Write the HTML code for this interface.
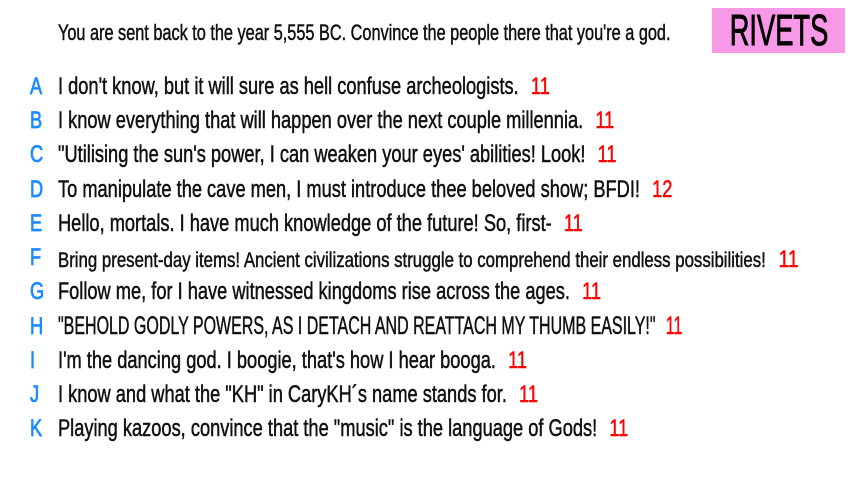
<!DOCTYPE html>
<html><head><meta charset="utf-8"><style>
body{margin:0;width:853px;height:480px;background:#fff;position:relative;overflow:hidden;font-family:"Liberation Sans Narrow","Liberation Sans",sans-serif;color:#111}
.t{position:absolute;white-space:nowrap;transform-origin:left center;transform:scaleX(.76);-webkit-text-stroke:0.5px currentColor}
.title{left:58px;top:20px;font-size:22px;transform:scaleX(.74)}
.box{position:absolute;left:712px;top:8px;width:133px;height:45px;background:#f899e8;font-size:44px;line-height:45px;color:#000}
.box span{position:absolute;left:50%;top:0;white-space:nowrap;transform:translateX(-50%) scaleX(.62);-webkit-text-stroke:1px #000}
.l{position:absolute;left:30px;color:#1a8cff;font-size:24px;-webkit-text-stroke:0.8px #1a8cff}
.r{left:58px;font-size:24px}
.n{color:#f00;margin-left:16px}
</style></head><body>
<div class="t title">You are sent back to the year 5,555 BC. Convince the people there that you're a god.</div>
<div class="box"><span>RIVETS</span></div>

<div class="l t" style="top:73px">A</div><div class="t r" style="top:73px">I don't know, but it will sure as hell confuse archeologists.<span class="n">11</span></div>
<div class="l t" style="top:107px">B</div><div class="t r" style="top:107px">I know everything that will happen over the next couple millennia.<span class="n">11</span></div>
<div class="l t" style="top:141px">C</div><div class="t r" style="top:141px">"Utilising the sun's power, I can weaken your eyes' abilities! Look!<span class="n">11</span></div>
<div class="l t" style="top:176px">D</div><div class="t r" style="top:176px">To manipulate the cave men, I must introduce thee beloved show; BFDI!<span class="n">12</span></div>
<div class="l t" style="top:210px">E</div><div class="t r" style="top:210px">Hello, mortals. I have much knowledge of the future! So, first-<span class="n">11</span></div>
<div class="l t" style="top:244px">F</div><div class="t r" style="top:246px;font-size:21px;transform:scaleX(.8)">Bring present-day items! Ancient civilizations struggle to comprehend their endless possibilities!<span class="n" style="font-size:24px">11</span></div>
<div class="l t" style="top:278px">G</div><div class="t r" style="top:278px">Follow me, for I have witnessed kingdoms rise across the ages.<span class="n">11</span></div>
<div class="l t" style="top:313px">H</div><div class="t r" style="top:312px;font-size:25px;transform:scaleX(.64)">"BEHOLD GODLY POWERS, AS I DETACH AND REATTACH MY THUMB EASILY!"<span class="n">11</span></div>
<div class="l t" style="top:347px">I</div><div class="t r" style="top:347px">I'm the dancing god. I boogie, that's how I hear booga.<span class="n">11</span></div>
<div class="l t" style="top:381px">J</div><div class="t r" style="top:381px">I know and what the "KH" in CaryKH´s name stands for.<span class="n">11</span></div>
<div class="l t" style="top:415px">K</div><div class="t r" style="top:415px">Playing kazoos, convince that the "music" is the language of Gods!<span class="n">11</span></div>
</body></html>
